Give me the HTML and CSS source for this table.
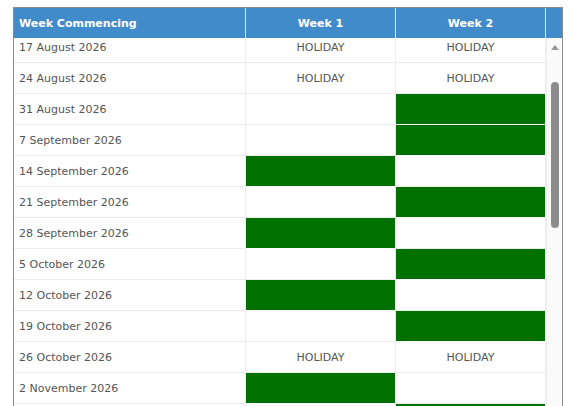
FILE: index.html
```html
<!DOCTYPE html>
<html>
<head>
<meta charset="utf-8">
<link rel="stylesheet" href="styles.css">
</head>
<body>
<div class="grid">
  <div class="head">
    <div class="hc c1 left">Week Commencing</div>
    <div class="hc c2">Week 1</div>
    <div class="hc c3">Week 2</div>
    <div class="hc sb"></div>
  </div>
  <div class="bodywrap">
    <div class="viewport">
      <div class="rows">
        <div class="row"><div class="cell c1">17 August 2026</div><div class="cell c2">HOLIDAY</div><div class="cell c3">HOLIDAY</div></div>
        <div class="row"><div class="cell c1">24 August 2026</div><div class="cell c2">HOLIDAY</div><div class="cell c3">HOLIDAY</div></div>
        <div class="row"><div class="cell c1">31 August 2026</div><div class="cell c2"></div><div class="cell c3 on"></div></div>
        <div class="row"><div class="cell c1">7 September 2026</div><div class="cell c2"></div><div class="cell c3 on"></div></div>
        <div class="row"><div class="cell c1">14 September 2026</div><div class="cell c2 on"></div><div class="cell c3"></div></div>
        <div class="row"><div class="cell c1">21 September 2026</div><div class="cell c2"></div><div class="cell c3 on"></div></div>
        <div class="row"><div class="cell c1">28 September 2026</div><div class="cell c2 on"></div><div class="cell c3"></div></div>
        <div class="row"><div class="cell c1">5 October 2026</div><div class="cell c2"></div><div class="cell c3 on"></div></div>
        <div class="row"><div class="cell c1">12 October 2026</div><div class="cell c2 on"></div><div class="cell c3"></div></div>
        <div class="row"><div class="cell c1">19 October 2026</div><div class="cell c2"></div><div class="cell c3 on"></div></div>
        <div class="row"><div class="cell c1">26 October 2026</div><div class="cell c2">HOLIDAY</div><div class="cell c3">HOLIDAY</div></div>
        <div class="row"><div class="cell c1">2 November 2026</div><div class="cell c2 on"></div><div class="cell c3"></div></div>
        <div class="row"><div class="cell c1"></div><div class="cell c2"></div><div class="cell c3 on"></div></div>
      </div>
    </div>
    <div class="scrollbar">
      <div class="arrow"></div>
      <div class="thumb"></div>
    </div>
  </div>
</div>
</body>
</html>
```
FILE: styles.css
```css
html, body {
  margin: 0;
  padding: 0;
  background: #fff;
  overflow: hidden;
}
body {
  padding: 7px 0 0 13px;
  font-family: "DejaVu Sans", Verdana, sans-serif;
}
.grid {
  width: 548px;
  height: 398px;
  border: 1px solid #8a8a8a;
  border-bottom: none;
  display: flex;
  flex-direction: column;
}
.head {
  display: flex;
  height: 30px;
  background: #428bca;
  color: #fff;
  font-weight: bold;
  font-size: 11px;
  flex: none;
}
.hc {
  display: flex;
  align-items: center;
  justify-content: center;
  border-right: 1px solid #dfe8f2;
  box-sizing: border-box;
}
.hc.left {
  justify-content: flex-start;
  padding-left: 5px;
}
.hc.sb { border-right: none; width: 16px; }
.c1 { width: 232px; }
.c2 { width: 150px; }
.c3 { width: 150px; }
.bodywrap {
  display: flex;
  flex: 1;
  min-height: 0;
}
.viewport {
  width: 532px;
  overflow: hidden;
}
.rows {
  margin-top: -6px;
}
.row {
  display: flex;
  height: 31px;
}
.cell {
  box-sizing: border-box;
  height: 31px;
  padding-top: 1px;
  border-right: 1px solid #ececec;
  border-bottom: 1px solid #ececec;
  display: flex;
  align-items: center;
  justify-content: center;
  font-size: 11px;
  color: #555;
}
.cell.c1 {
  justify-content: flex-start;
  padding-left: 5px;
}
.cell.on {
  background: #007000;
  border-color: #fff;
}
.scrollbar {
  width: 16px;
  background: #fafafa;
  border-left: 1px solid #efefef;
  box-sizing: border-box;
  display: flex;
  flex-direction: column;
  align-items: center;
}
.arrow {
  margin-top: 7px;
  width: 0;
  height: 0;
  border-left: 4px solid transparent;
  border-right: 4px solid transparent;
  border-bottom: 5px solid #999;
}
.thumb {
  margin-top: 32px;
  width: 8px;
  height: 146px;
  border-radius: 4px;
  background: #8c8c8c;
}
```
